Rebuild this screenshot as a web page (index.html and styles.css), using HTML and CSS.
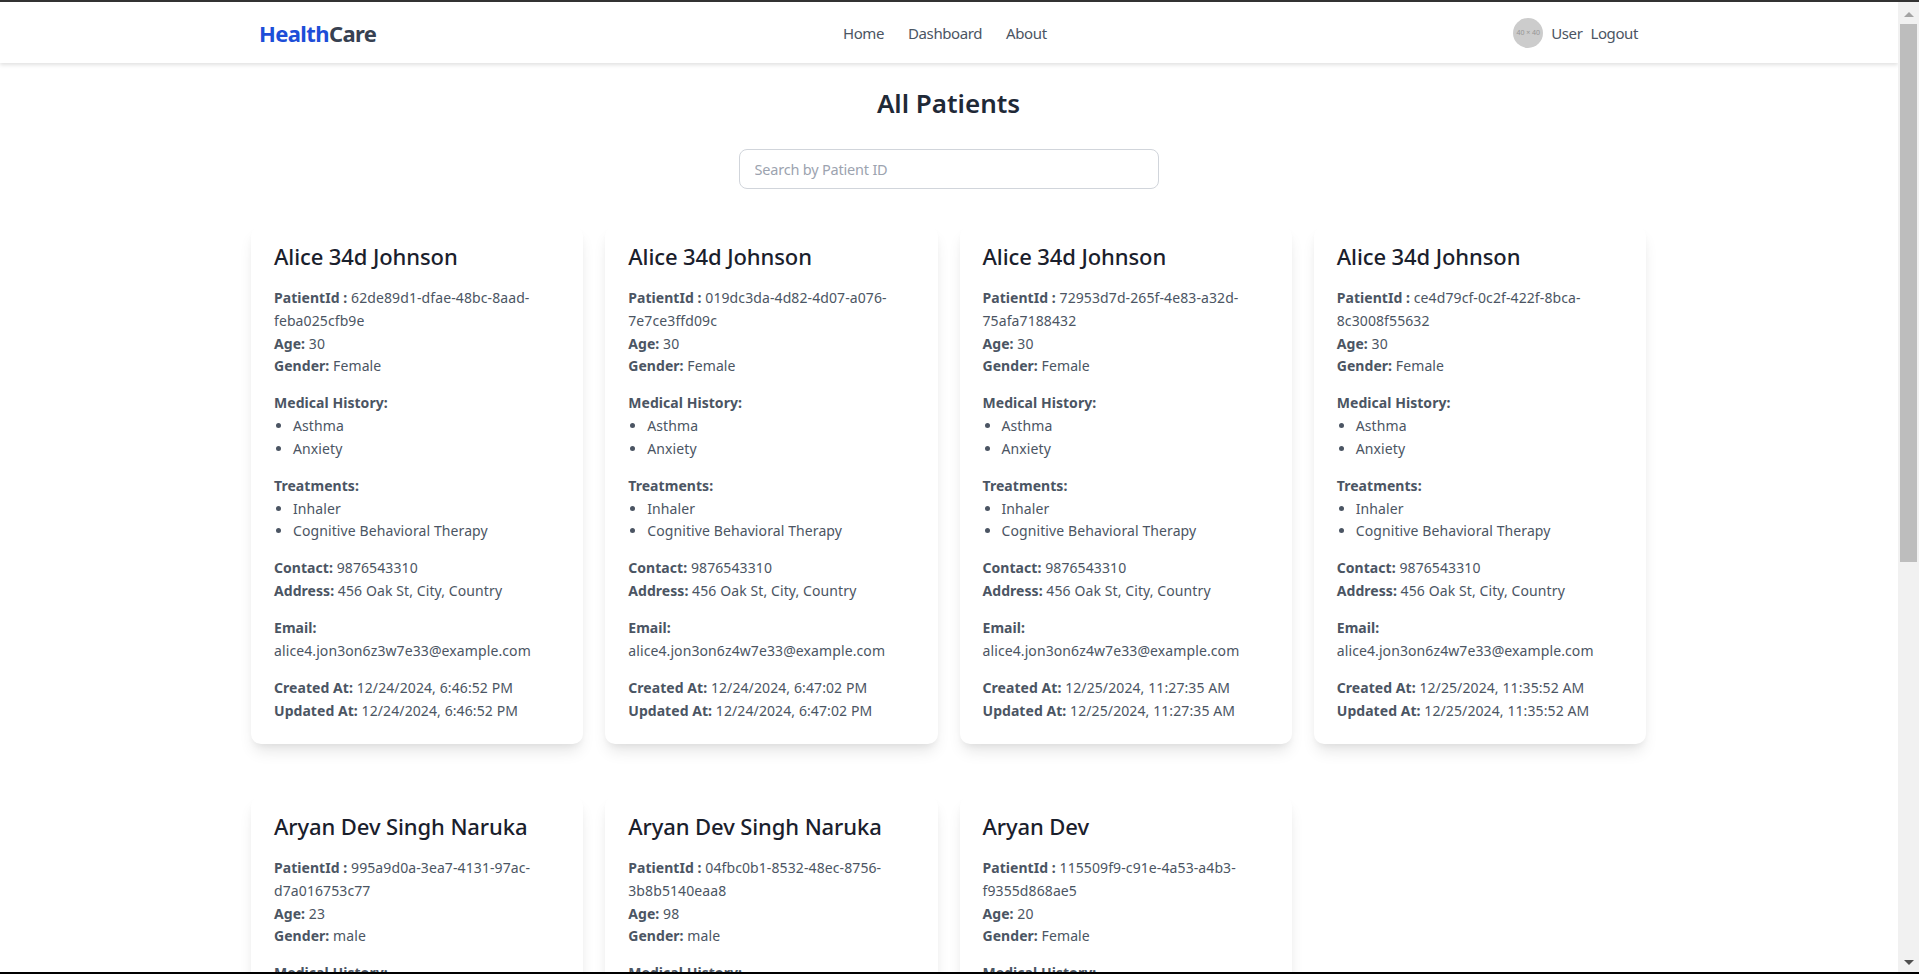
FILE: index.html
```html
<!DOCTYPE html>
<html lang="en">
  <head>
    <meta charset="UTF-8" />
    <meta name="viewport" content="width=device-width, initial-scale=1.0" />
    <title>HealthCare - All Patients</title>
    <link rel="stylesheet" href="styles.css">
  </head>
  <body>
    <div class="window-frame">
      <div class="page">
        <nav class="navbar">
          <div class="navbar-inner">
            <a class="logo"><span class="logo-accent">Health</span>Care</a>
            <div class="nav-links">
              <a>Home</a>
              <a>Dashboard</a>
              <a>About</a>
            </div>
            <div class="nav-user">
              <span class="avatar">40 × 40</span>
              <a>User</a>
              <a>Logout</a>
            </div>
          </div>
        </nav>

        <main class="content">
          <h1 class="page-title">All Patients</h1>
          <div class="search-row">
            <input class="search-input" type="text" placeholder="Search by Patient ID" />
          </div>

          <div class="patient-grid">
            <div class="patient-card">
              <h2>Alice 34d Johnson</h2>
              <p><strong>PatientId :</strong> 62de89d1-dfae-48bc-8aad-feba025cfb9e</p>
              <p><strong>Age:</strong> 30</p>
              <p class="group-end"><strong>Gender:</strong> Female</p>
              <p><strong>Medical History:</strong></p>
              <ul><li>Asthma</li><li>Anxiety</li></ul>
              <p><strong>Treatments:</strong></p>
              <ul><li>Inhaler</li><li>Cognitive Behavioral Therapy</li></ul>
              <p><strong>Contact:</strong> 9876543310</p>
              <p class="group-end"><strong>Address:</strong> 456 Oak St, City, Country</p>
              <p><strong>Email:</strong></p>
              <p class="group-end">alice4.jon3on6z3w7e33@example.com</p>
              <p><strong>Created At:</strong> 12/24/2024, 6:46:52 PM</p>
              <p><strong>Updated At:</strong> 12/24/2024, 6:46:52 PM</p>
            </div>

            <div class="patient-card">
              <h2>Alice 34d Johnson</h2>
              <p><strong>PatientId :</strong> 019dc3da-4d82-4d07-a076-7e7ce3ffd09c</p>
              <p><strong>Age:</strong> 30</p>
              <p class="group-end"><strong>Gender:</strong> Female</p>
              <p><strong>Medical History:</strong></p>
              <ul><li>Asthma</li><li>Anxiety</li></ul>
              <p><strong>Treatments:</strong></p>
              <ul><li>Inhaler</li><li>Cognitive Behavioral Therapy</li></ul>
              <p><strong>Contact:</strong> 9876543310</p>
              <p class="group-end"><strong>Address:</strong> 456 Oak St, City, Country</p>
              <p><strong>Email:</strong></p>
              <p class="group-end">alice4.jon3on6z4w7e33@example.com</p>
              <p><strong>Created At:</strong> 12/24/2024, 6:47:02 PM</p>
              <p><strong>Updated At:</strong> 12/24/2024, 6:47:02 PM</p>
            </div>

            <div class="patient-card">
              <h2>Alice 34d Johnson</h2>
              <p><strong>PatientId :</strong> 72953d7d-265f-4e83-a32d-75afa7188432</p>
              <p><strong>Age:</strong> 30</p>
              <p class="group-end"><strong>Gender:</strong> Female</p>
              <p><strong>Medical History:</strong></p>
              <ul><li>Asthma</li><li>Anxiety</li></ul>
              <p><strong>Treatments:</strong></p>
              <ul><li>Inhaler</li><li>Cognitive Behavioral Therapy</li></ul>
              <p><strong>Contact:</strong> 9876543310</p>
              <p class="group-end"><strong>Address:</strong> 456 Oak St, City, Country</p>
              <p><strong>Email:</strong></p>
              <p class="group-end">alice4.jon3on6z4w7e33@example.com</p>
              <p><strong>Created At:</strong> 12/25/2024, 11:27:35 AM</p>
              <p><strong>Updated At:</strong> 12/25/2024, 11:27:35 AM</p>
            </div>

            <div class="patient-card">
              <h2>Alice 34d Johnson</h2>
              <p><strong>PatientId :</strong> ce4d79cf-0c2f-422f-8bca-8c3008f55632</p>
              <p><strong>Age:</strong> 30</p>
              <p class="group-end"><strong>Gender:</strong> Female</p>
              <p><strong>Medical History:</strong></p>
              <ul><li>Asthma</li><li>Anxiety</li></ul>
              <p><strong>Treatments:</strong></p>
              <ul><li>Inhaler</li><li>Cognitive Behavioral Therapy</li></ul>
              <p><strong>Contact:</strong> 9876543310</p>
              <p class="group-end"><strong>Address:</strong> 456 Oak St, City, Country</p>
              <p><strong>Email:</strong></p>
              <p class="group-end">alice4.jon3on6z4w7e33@example.com</p>
              <p><strong>Created At:</strong> 12/25/2024, 11:35:52 AM</p>
              <p><strong>Updated At:</strong> 12/25/2024, 11:35:52 AM</p>
            </div>

            <div class="patient-card">
              <h2>Aryan Dev Singh Naruka</h2>
              <p><strong>PatientId :</strong> 995a9d0a-3ea7-4131-97ac-d7a016753c77</p>
              <p><strong>Age:</strong> 23</p>
              <p class="group-end"><strong>Gender:</strong> male</p>
              <p><strong>Medical History:</strong></p>
            </div>

            <div class="patient-card">
              <h2>Aryan Dev Singh Naruka</h2>
              <p><strong>PatientId :</strong> 04fbc0b1-8532-48ec-8756-3b8b5140eaa8</p>
              <p><strong>Age:</strong> 98</p>
              <p class="group-end"><strong>Gender:</strong> male</p>
              <p><strong>Medical History:</strong></p>
            </div>

            <div class="patient-card">
              <h2>Aryan Dev</h2>
              <p><strong>PatientId :</strong> 115509f9-c91e-4a53-a4b3-f9355d868ae5</p>
              <p><strong>Age:</strong> 20</p>
              <p class="group-end"><strong>Gender:</strong> Female</p>
              <p><strong>Medical History:</strong></p>
            </div>
          </div>
        </main>
      </div>

      <div class="scrollbar">
        <span class="arrow-up"></span>
        <div class="scroll-track"><div class="scroll-thumb"></div></div>
        <span class="arrow-down"></span>
      </div>
    </div>
  </body>
</html>
```

FILE: styles.css
```css
/* Patients page */
html,
body {
  height: 100%;
  margin: 0;
  overflow: hidden;
}

body {
  font-family: "Noto Sans", sans-serif;
  background-color: #000;
  color: #4b5563;
}

.window-frame {
  display: flex;
  height: 100%;
  box-sizing: border-box;
  border-top: 2px solid #333;
  border-bottom: 2px solid #000;
  background-color: #fff;
}

.page {
  flex: 1;
  min-width: 0;
  overflow: hidden;
}

/* Navbar */
.navbar {
  height: 61px;
  background-color: #fff;
  box-shadow: 0 2px 4px rgba(0, 0, 0, 0.12);
}

.navbar-inner {
  width: 1379px;
  height: 100%;
  margin-left: 259px;
  display: flex;
  align-items: center;
  justify-content: space-between;
  font-size: 15px;
  letter-spacing: -0.4px;
}

.logo {
  font-size: 22px;
  font-weight: 700;
  color: #374151;
  letter-spacing: -0.6px;
}

.logo-accent {
  color: #1d4ed8;
}

.nav-links {
  display: flex;
  gap: 24px;
}

.nav-user {
  display: flex;
  align-items: center;
  gap: 8px;
}

.avatar {
  width: 30px;
  height: 30px;
  border-radius: 50%;
  background-color: #ccc;
  color: #969696;
  font-size: 7px;
  letter-spacing: 0;
  display: flex;
  align-items: center;
  justify-content: center;
}

/* Main content */
.content {
  width: 1395px;
  margin-left: 251px;
}

.page-title {
  margin: 0;
  padding-top: 20px;
  font-size: 26px;
  line-height: 40px;
  font-weight: 600;
  text-align: center;
  color: #1f2937;
}

.search-row {
  display: flex;
  justify-content: center;
  margin-top: 26px;
}

.search-input {
  width: 420px;
  height: 40px;
  box-sizing: border-box;
  padding: 0 15px;
  border: 1px solid #d1d5db;
  border-radius: 8px;
  font-family: inherit;
  font-size: 14.5px;
  letter-spacing: -0.2px;
}

.search-input::placeholder {
  color: #9ca3af;
}

.patient-grid {
  display: grid;
  grid-template-columns: repeat(4, 1fr);
  column-gap: 22px;
  row-gap: 52px;
  margin-top: 37px;
}

.patient-card {
  padding: 14px 23px 21.75px;
  background-color: #fff;
  border-radius: 10px;
  box-shadow: 0 10px 15px -3px rgba(0, 0, 0, 0.1), 0 4px 6px -2px rgba(0, 0, 0, 0.05);
  font-size: 14px;
  line-height: 22.75px;
  letter-spacing: 0.1px;
}

.patient-card h2 {
  margin: 0 0 15px;
  font-size: 22px;
  line-height: 32px;
  font-weight: 500;
  letter-spacing: -0.1px;
  color: #1a202c;
}

.patient-card p {
  margin: 0;
}

.patient-card p.group-end {
  margin-bottom: 14.25px;
}

.patient-card strong {
  font-weight: 700;
  letter-spacing: 0.05px;
}

.patient-card ul {
  margin: 0 0 14.25px;
  padding-left: 19px;
}

/* Scrollbar drawn by hand so it looks like the classic one */
.scrollbar {
  width: 21px;
  flex-shrink: 0;
  display: flex;
  flex-direction: column;
  align-items: center;
  background-color: #f1f1f1;
}

.arrow-up,
.arrow-down {
  width: 0;
  height: 0;
  border-left: 5px solid transparent;
  border-right: 5px solid transparent;
}

.arrow-up {
  margin: 10px 0 7px;
  border-bottom: 5px solid #a3a3a3;
}

.arrow-down {
  margin: 7px 0 7px;
  border-top: 5px solid #505050;
}

.scroll-track {
  flex: 1;
  width: 17px;
}

.scroll-thumb {
  height: 538px;
  background-color: #bdbdbd;
}
```
